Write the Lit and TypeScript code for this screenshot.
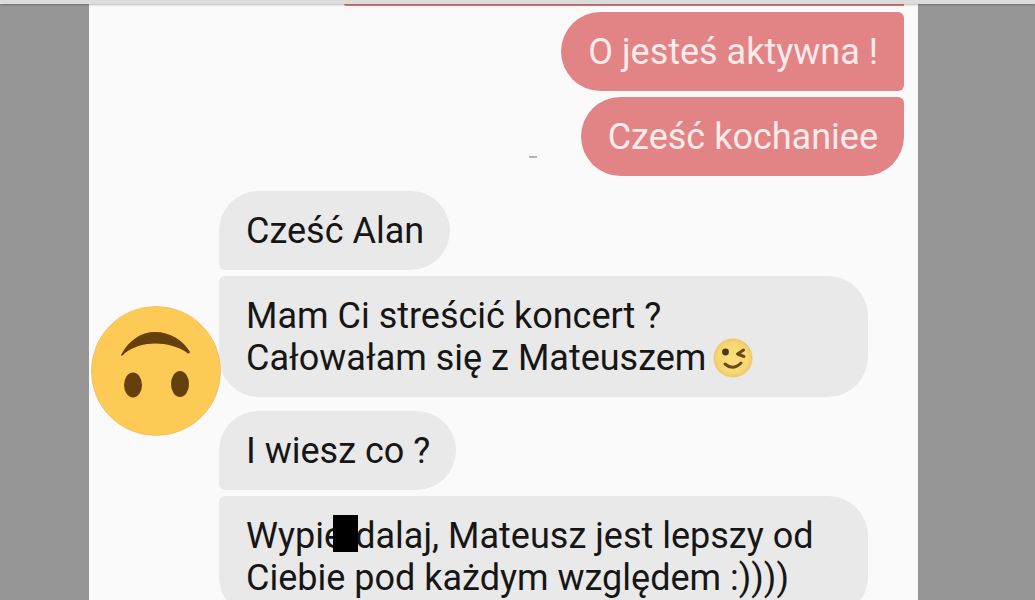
import { LitElement, html, css } from "lit";
import { customElement } from "lit/decorators.js";

@customElement("upside-down-face")
class UpsideDownFace extends LitElement {
  static styles = css`
    :host { display: block; }
    svg { display: block; width: 100%; }
  `;
  render() {
    return html`<svg viewBox="0 0 130 130" role="img" aria-label="Upside-down face">
      <circle cx="65" cy="65" r="64.5" fill="#fdca56" stroke="#efc468" stroke-width="1" />
      <path d="M30 49C38 34 50 26 64 26C79 26 92 34 99 46Q98 49 95 46C78 35 51 34 34 47Q31 51 30 49Z" fill="#65400c" />
      <ellipse cx="42" cy="79" rx="9" ry="12.5" fill="#65400c" />
      <ellipse cx="89" cy="78" rx="9" ry="13" fill="#65400c" />
    </svg>`;
  }
}

@customElement("wink-face")
class WinkFace extends LitElement {
  static styles = css`
    :host { display: inline-block; width: 40px; height: 40px; vertical-align: -4px; margin: -4px 0 -4px -2px; }
    svg { display: block; width: 100%; }
  `;
  render() {
    return html`<svg viewBox="0 0 40 40" role="img" aria-label="Winking face">
      <defs>
        <radialGradient id="g">
          <stop offset="0" stop-color="#fbe07c" />
          <stop offset="0.75" stop-color="#f8d873" />
          <stop offset="1" stop-color="#efc76c" />
        </radialGradient>
      </defs>
      <circle cx="20" cy="20" r="19.5" fill="url(#g)" />
      <circle cx="12.5" cy="14" r="3.4" fill="#4c3718" />
      <path d="M30.500 12L24.500 16L31 18.500" fill="none" stroke="#6a4a1c" stroke-width="3" stroke-linecap="round" stroke-linejoin="round" />
      <path d="M12 26Q20 33 28 25" fill="none" stroke="#6a4a1c" stroke-width="3" stroke-linecap="round" />
    </svg>`;
  }
}

@customElement("app-root")
class AppRoot extends LitElement {
  static styles = css`
    :host {
      display: flex;
      flex-direction: column;
      height: 100vh;
      overflow: hidden;
      background: #969696;
      font-family: Roboto, "Liberation Sans", sans-serif;
      font-size: 36px;
      line-height: 42px;
      color: #161616;
    }
    .bar {
      flex: none;
      height: 4px;
      background: #dcdcdc;
      box-shadow: 0 0 3px rgba(0, 0, 0, 0.5);
      z-index: 1;
    }
    .stage {
      flex: 1;
      min-height: 0;
      display: grid;
      grid-template-columns: 89fr 829fr 117fr;
    }
    .chat {
      grid-column: 2;
      min-width: 0;
      overflow: hidden;
      background: #fafafa;
    }
    .sent {
      display: flex;
      flex-direction: column;
      align-items: flex-end;
      gap: 6px;
      padding-right: 14px;
    }
    .row { display: flex; align-items: flex-end; }
    .dash {
      width: 8px;
      height: 2px;
      margin: 0 44px 18px 0;
      background: #b4b4b4;
    }
    .bubble {
      box-sizing: border-box;
      margin: 0;
      padding: 19px 26px 18px 27px;
      white-space: pre-line;
    }
    .out {
      background: #e28485;
      color: #fcebea;
      border-radius: 40px 6px 6px 40px;
    }
    .out.last { border-bottom-right-radius: 40px; }
    .tail {
      width: 560px;
      height: 2px;
      background: #d97f7d;
      border-radius: 0 0 6px 40px;
    }
    .received {
      display: grid;
      grid-template-columns: 130px 1fr;
      padding: 15px 50px 0 2px;
    }
    .avatar {
      position: relative;
      z-index: 1;
      margin-top: 115px;
    }
    .thread {
      display: flex;
      flex-direction: column;
      align-items: flex-start;
      gap: 6px;
      margin-left: -2px;
    }
    .in { background: #e9e9e9; }
    .first { border-radius: 40px 40px 40px 6px; }
    .end { border-radius: 6px 40px 40px 40px; align-self: stretch; }
    .gap { margin-top: 8px; }
    .censor { position: relative; }
    .block {
      position: absolute;
      left: -10px;
      top: 0;
      width: 25px;
      height: 37px;
      background: #000;
    }
  `;
  render() {
    return html`
      <div class="bar"></div>
      <main class="stage">
        <section class="chat">
          <div class="sent">
            <div class="tail"></div>
            <p class="bubble out">O jesteś aktywna !</p>
            <div class="row">
              <span class="dash"></span>
              <p class="bubble out last">Cześć kochaniee</p>
            </div>
          </div>
          <div class="received">
            <upside-down-face class="avatar"></upside-down-face>
            <div class="thread">
              <p class="bubble in first">Cześć Alan</p>
              <p class="bubble in end">Mam Ci streścić koncert ?<br />Całowałam się z Mateuszem <wink-face></wink-face></p>
              <p class="bubble in first gap">I wiesz co ?</p>
              <p class="bubble in end">Wypie<span class="censor">r<span class="block"></span></span>dalaj, Mateusz jest lepszy od<br />Ciebie pod każdym względem :))))</p>
            </div>
          </div>
        </section>
      </main>
    `;
  }
}
